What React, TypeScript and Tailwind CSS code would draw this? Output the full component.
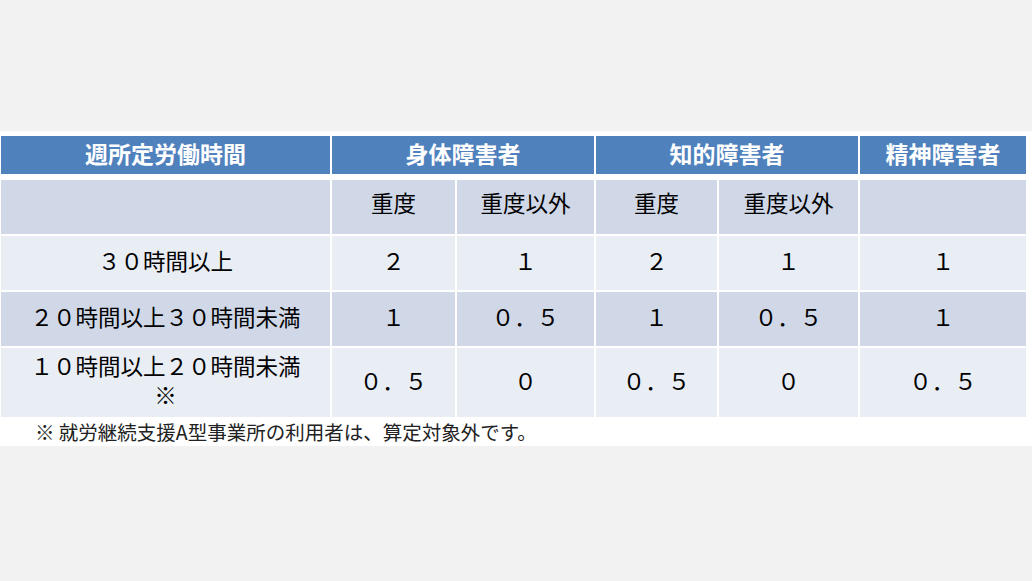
const cols = "grid grid-cols-[329px_123px_137px_121px_139px_166px] gap-x-[2px]";

const rows = [
  { label: ["３０時間以上"], vals: ["２", "１", "２", "１", "１"], bg: "bg-[#e9edf4]", h: "h-[54px]" },
  { label: ["２０時間以上３０時間未満"], vals: ["１", "０．５", "１", "０．５", "１"], bg: "bg-[#d0d8e8]", h: "h-[54px]" },
  { label: ["１０時間以上２０時間未満", "※"], vals: ["０．５", "０", "０．５", "０", "０．５"], bg: "bg-[#e9edf4]", h: "h-[69px]" },
];

export default function App() {
  return (
    <main
      className="w-[1032px] h-[581px] bg-[#f2f2f2] pt-[131px] text-black"
      style={{ fontFamily: '"Noto Sans CJK JP", "Liberation Sans", sans-serif' }}
    >
      <div className="bg-white h-[315px] pt-[5px] pl-[1px]">
        <div className="flex flex-col gap-y-[2px]">
          <div className={`${cols} mb-[4px] text-[23px] font-bold text-white`}>
            <div className="h-[38px] pb-[3px] bg-[#4f81bd] flex items-center justify-center">週所定労働時間</div>
            <div className="col-span-2 h-[38px] pb-[3px] bg-[#4f81bd] flex items-center justify-center">身体障害者</div>
            <div className="col-span-2 h-[38px] pb-[3px] bg-[#4f81bd] flex items-center justify-center">知的障害者</div>
            <div className="h-[38px] pb-[3px] bg-[#4f81bd] flex items-center justify-center">精神障害者</div>
          </div>

          <div className={`${cols} text-[22.5px]`}>
            <div className="h-[54px] bg-[#d0d8e8]" />
            <div className="h-[54px] pb-[8px] bg-[#d0d8e8] flex items-center justify-center">重度</div>
            <div className="h-[54px] pb-[8px] bg-[#d0d8e8] flex items-center justify-center">重度以外</div>
            <div className="h-[54px] pb-[8px] bg-[#d0d8e8] flex items-center justify-center">重度</div>
            <div className="h-[54px] pb-[8px] bg-[#d0d8e8] flex items-center justify-center">重度以外</div>
            <div className="h-[54px] bg-[#d0d8e8]" />
          </div>

          {rows.map((r, i) => (
            <div key={i} className={`${cols} text-[22.5px]`}>
              <div className={`${r.h} ${r.bg} pb-[5px] flex flex-col items-center justify-center leading-[29px]`}>
                {r.label.map((l, j) => (
                  <span key={j}>{l}</span>
                ))}
              </div>
              {r.vals.map((v, j) => (
                <div key={j} className={`${r.h} ${r.bg} pb-[4px] flex items-center justify-center`}>
                  {v}
                </div>
              ))}
            </div>
          ))}
        </div>

        <p className="pl-[34px] pt-[2px] text-[19.5px] leading-[26px] text-[#222]">
          ※ 就労継続支援A型事業所の利用者は、算定対象外です。
        </p>
      </div>
    </main>
  );
}
